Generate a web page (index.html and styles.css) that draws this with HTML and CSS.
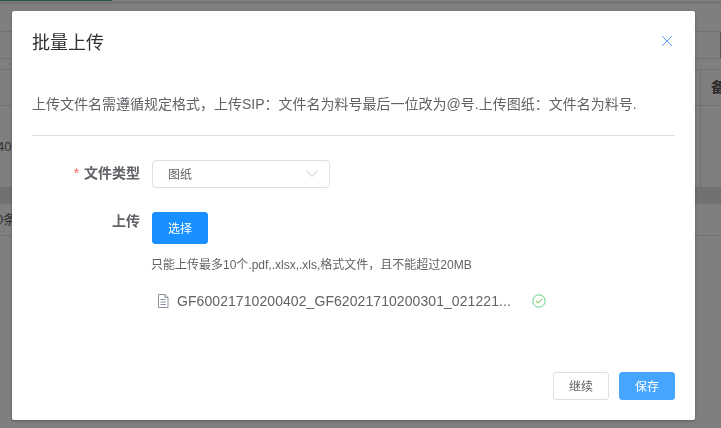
FILE: index.html
```html
<!DOCTYPE html>
<html lang="zh-CN">
<head>
<meta charset="utf-8">
<title>批量上传</title>
<link rel="stylesheet" href="styles.css">
</head>
<body>
<div class="page">
  <div class="progress"></div>
  <div class="topbar"></div>
  <div class="toolbar"></div>
  <div class="filter"><span class="edge-block"></span></div>
  <div class="filter-gap"></div>
  <div class="thead"><span class="th-right">备</span></div>
  <div class="row"><span class="cell-left">40</span><span class="cell-right"></span></div>
  <div class="scroll"></div>
  <div class="pager"><span class="count">0条</span></div>
</div>
<div class="mask"></div>
<section class="dialog">
  <header class="dialog-header">
    <h2 class="dialog-title">批量上传</h2>
    <svg class="close" viewBox="0 0 12 12" width="12" height="12"><path d="M1 1L11 11M11 1L1 11" fill="none" stroke="#5a9cf8" stroke-width="1"/></svg>
  </header>
  <div class="dialog-body">
    <p class="notice">上传文件名需遵循规定格式，上传SIP：文件名为料号最后一位改为@号.上传图纸：文件名为料号.</p>
    <div class="divider"></div>
    <div class="form-row type-row">
      <label class="form-label"><span class="req">*</span> 文件类型</label>
      <div class="select">
        <span class="select-value">图纸</span>
        <svg class="arrow" viewBox="0 0 12 8" width="12" height="8"><path d="M1 1L6 6.5L11 1" fill="none" stroke="#c0c4cc" stroke-width="1"/></svg>
      </div>
    </div>
    <div class="form-row">
      <label class="form-label upload-label">上传</label>
      <div class="upload">
        <button class="btn btn-primary" type="button">选择</button>
        <div class="tip">只能上传最多10个.pdf,.xlsx,.xls,格式文件，且不能超过20MB</div>
        <div class="file">
          <svg class="file-icon" viewBox="0 0 12 14" width="12" height="14"><path d="M1.5 .5H8L11 3.5V13.5H1.5ZM8 .5V3.5H11M3.5 5.5H8.5M3.5 8H9M3.5 10.5H9" fill="none" stroke="#8d939e" stroke-width="1"/></svg>
          <span class="file-name">GF60021710200402_GF62021710200301_021221...</span>
          <svg class="ok-icon" viewBox="0 0 14 14" width="14" height="14"><circle cx="7" cy="7" r="6.2" fill="none" stroke="#5fcf80" stroke-width="1"/><path d="M4 7L6.2 9.2L10.2 5" fill="none" stroke="#67c23a" stroke-width="1"/></svg>
        </div>
      </div>
    </div>
  </div>
  <footer class="dialog-footer">
    <button class="btn btn-plain" type="button">继续</button>
    <button class="btn btn-light" type="button">保存</button>
  </footer>
</section>
</body>
</html>
```
FILE: styles.css
```css
* { box-sizing: border-box; }
html, body { margin: 0; height: 100%; overflow: hidden; }
body {
  background: #fff;
  font-family: "Liberation Sans", "Noto Sans CJK SC", sans-serif;
  color: #606266;
}
.page { height: 428px; display: flex; flex-direction: column; font-size: 14px; overflow: hidden; }
.progress { width: 112px; height: 1px; background: #4caf8a; }
.topbar { height: 3px; background: #ececec; }
.toolbar { height: 28px; border-bottom: 1px solid #e0e0e0; }
.filter { height: 27px; border-bottom: 1px solid #e0e0e0; display: flex; justify-content: flex-end; }
.edge-block { width: 1px; background: #aaa; }
.filter-gap { height: 11px; border-bottom: 1px solid #e0e0e0; }
.thead { height: 36px; border-bottom: 1px solid #e0e0e0; display: flex; justify-content: flex-end; }
.th-right { width: 21px; padding-left: 10px; border-left: 1px solid #e0e0e0; line-height: 34px; font-weight: 700; color: #555; white-space: nowrap; }
.row { height: 81px; display: flex; justify-content: space-between; align-items: center; }
.cell-left { margin-left: -3px; font-size: 13px; }
.cell-right { width: 21px; height: 100%; border-left: 1px solid #e0e0e0; }
.scroll { height: 17px; background: #e2e2e2; }
.pager { height: 32px; border-bottom: 1px solid #e0e0e0; }
.count { display: block; margin-left: -4px; font-size: 13px; line-height: 32px; }
.mask { position: fixed; inset: 0; background: rgba(0, 0, 0, .5); }
.dialog {
  position: fixed;
  left: 12px;
  top: 11px;
  width: 683px;
  height: 409px;
  background: #fff;
  border-radius: 2px;
  box-shadow: 0 1px 3px rgba(0, 0, 0, .3);
  display: flex;
  flex-direction: column;
}
.dialog-header { display: flex; justify-content: space-between; align-items: flex-start; padding: 20px 22px 0 20px; height: 62px; }
.dialog-title { margin: 0; font-size: 18px; line-height: 24px; font-weight: 400; color: #303133; }
.close { margin-top: 4px; }
.dialog-body { flex: 1; padding: 0 20px; font-size: 14px; }
.notice { margin: 0; padding-top: 21px; line-height: 20px; font-size: 14px; color: #606266; white-space: nowrap; }
.divider { margin-top: 21px; height: 1px; background: #dcdfe6; }
.form-row { display: flex; }
.type-row { margin-top: 24px; margin-bottom: 24px; }
.form-label { width: 120px; padding-right: 12px; line-height: 27px; text-align: right; font-size: 14px; font-weight: 700; color: #606266; }
.upload-label { line-height: 18px; }
.req { color: #f56c6c; font-weight: 400; margin-right: 1px; }
.select { width: 178px; height: 28px; border: 1px solid #dcdfe6; border-radius: 4px; padding: 0 15px; display: flex; align-items: center; justify-content: space-between; font-size: 12px; }
.select-value { padding-bottom: 2px; }
.arrow { margin-right: -4px; }
.upload { display: flex; flex-direction: column; align-items: flex-start; }
.btn { width: 56px; height: 28px; border-radius: 3px; font: 12px "Liberation Sans", "Noto Sans CJK SC", sans-serif; padding: 0 0 2px; }
.btn-primary { height: 32px; background: #1890ff; border: 1px solid #1890ff; color: #fff; }
.tip { margin: 12px 0 0 -1px; line-height: 18px; font-size: 12px; }
.file { display: flex; align-items: center; margin-top: 18px; height: 18px; margin-left: 5px; font-size: 14px; }
.file-name { margin-left: 8px; width: 333px; white-space: nowrap; color: #606266; letter-spacing: .07px; }
.ok-icon { margin-left: 22px; }
.dialog-footer { display: flex; justify-content: flex-end; gap: 10px; padding: 0 20px 20px; }
.btn-plain { background: #fff; border: 1px solid #dcdfe6; color: #606266; }
.btn-light { background: #46a6ff; border: 1px solid #46a6ff; color: #fff; }
```
